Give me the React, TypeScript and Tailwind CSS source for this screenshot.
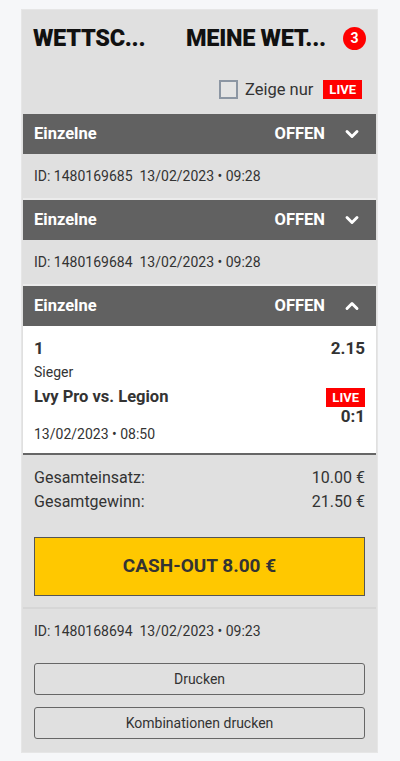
import { ChevronDown, ChevronUp } from "lucide-react";

const font = { fontFamily: "Roboto, 'Noto Sans', Arial, sans-serif" };

const LiveBadge = () => (
  <span className="inline-flex h-[19px] items-center bg-[#ff0000] px-[6px] text-[13px] font-bold leading-none text-white">
    LIVE
  </span>
);

const BetHeader = ({ open }: { open?: boolean }) => (
  <div className="flex h-10 items-center bg-[#616161] pl-[11px] pr-[14px] text-white">
    <span className="flex-1 text-[16.5px] font-bold">Einzelne</span>
    <span className="text-[16.5px] font-bold">OFFEN</span>
    {open ? (
      <ChevronUp className="ml-[17px] h-[20px] w-[20px]" strokeWidth={3.5} />
    ) : (
      <ChevronDown className="ml-[17px] h-[20px] w-[20px]" strokeWidth={3.5} />
    )}
  </div>
);

const IdRow = ({ id, date }: { id: string; date: string }) => (
  <div className="flex h-11 items-center pl-[11px] text-[14px] text-[#333]">
    ID: {id}&nbsp; {date}
  </div>
);

export default function App() {
  return (
    <div className="min-h-[761px] bg-[#f6f7f9] pt-[9px] pb-[8px]" style={font}>
      <div className="ml-[21px] w-[357px] border border-[#e6e6e6] bg-[#e0e0e0] px-px pb-[13px]">
        {/* tabs */}
        <div className="flex h-[57px] items-center pl-[10px] pr-[10px]">
          <span className="w-[153px] text-[23.5px] font-black tracking-[-0.3px] text-[#111]">WETTSC...</span>
          <span className="flex-1 text-[23.5px] font-black tracking-[-0.3px] text-[#111]">MEINE WET...</span>
          <span className="flex h-[23px] w-[23px] items-center justify-center rounded-full bg-[#ff0000] text-[14px] font-bold text-white">
            3
          </span>
        </div>
        <div className="flex h-[47px] items-start justify-end pr-[14px] pt-[13px]">
          <div className="flex h-[19px] items-center">
            <span className="h-[19px] w-[19px] border-2 border-[#8c96a3] bg-[#e4e4e4]" />
            <span className="ml-[7px] mr-[10px] text-[16.5px] leading-[19px] text-[#333]">Zeige nur</span>
            <LiveBadge />
          </div>
        </div>

        <BetHeader />
        <IdRow id="1480169685" date="13/02/2023 • 09:28" />
        <div className="h-[2px] bg-[#ebebeb]" />
        <BetHeader />
        <IdRow id="1480169684" date="13/02/2023 • 09:28" />
        <div className="h-[2px] bg-[#ebebeb]" />
        <BetHeader open />

        {/* open bet */}
        <div className="border-b-2 border-[#666] bg-white px-[11px] pt-[11px] pb-[9px] text-[#333]">
          <div className="flex items-center justify-between text-[17px] font-bold leading-[22px]">
            <span>1</span>
            <span>2.15</span>
          </div>
          <div className="mt-[3px] text-[14px] leading-[20px]">Sieger</div>
          <div className="mt-[4px] flex items-start justify-between">
            <span className="text-[16.5px] font-bold leading-[22px]">Lvy Pro vs. Legion</span>
            <div className="mt-[2px] flex flex-col items-end">
              <LiveBadge />
              <span className="text-[17px] font-bold leading-[18px]">0:1</span>
            </div>
          </div>
          <div className="-mt-px text-[14px] leading-[20px]">13/02/2023 • 08:50</div>
        </div>

        <div className="px-[11px] pt-[11px] text-[16px] text-[#333]">
          <div className="flex justify-between leading-[24px]">
            <span>Gesamteinsatz:</span>
            <span>10.00 €</span>
          </div>
          <div className="flex justify-between leading-[24px]">
            <span>Gesamtgewinn:</span>
            <span>21.50 €</span>
          </div>
          <button className="mt-[23px] flex h-[59px] w-full items-center justify-center border border-[#555] bg-[#ffc800] text-[19px] font-bold text-[#333]">
            CASH-OUT 8.00 €
          </button>
        </div>
        <div className="mt-[11px] h-[2px] bg-[#d6d6d6]" />
        <IdRow id="1480168694" date="13/02/2023 • 09:23" />
        <div className="flex flex-col gap-[12px] px-[11px] pt-[10px]">
          <button className="h-[32px] rounded-[3px] border border-[#666] text-[14px] text-[#333]">Drucken</button>
          <button className="h-[32px] rounded-[3px] border border-[#666] text-[14px] text-[#333]">
            Kombinationen drucken
          </button>
        </div>
      </div>
    </div>
  );
}
